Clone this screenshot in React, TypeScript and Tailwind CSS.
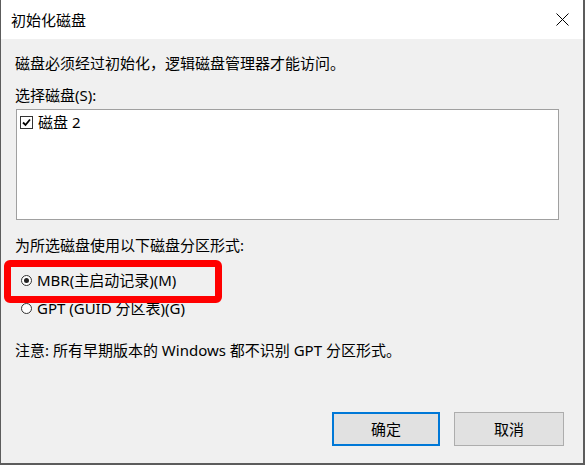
import React from "react";

const font = { fontFamily: '"Noto Sans", "Noto Sans CJK SC", sans-serif' };

export default function App() {
  return (
    <div
      className="relative w-[585px] h-[465px] overflow-hidden bg-[#f0f0f0] border-l border-r-2 border-b-2 border-[#5c5c5c] text-black text-[15px] leading-[20px]"
      style={font}
    >
      {/* title bar */}
      <div className="h-[39px] bg-white flex items-center justify-between pl-[10px] pr-[14px]">
        <span>初始化磁盘</span>
        <svg width="13" height="13" viewBox="0 0 13 13">
          <path d="M0.5 0.5 L12.5 12.5 M12.5 0.5 L0.5 12.5" stroke="#000" strokeWidth="1" />
        </svg>
      </div>

      <div className="flex flex-col pl-[14px]">
        <p className="mt-[14px]">磁盘必须经过初始化，逻辑磁盘管理器才能访问。</p>
        <p className="mt-[12px]">选择磁盘(S):</p>

        <div className="mt-[4px] ml-[1px] w-[543px] h-[111px] bg-white border border-[#a0a0a0]">
          <div className="flex items-center gap-[5px] pl-[3px] pt-[2px]">
            <span className="w-[13px] h-[13px] border border-[#333] bg-white flex items-center justify-center">
              <svg width="9" height="9" viewBox="0 0 9 9">
                <path d="M1 4.5 L3.5 7 L8 1.5" stroke="#000" strokeWidth="1.8" fill="none" />
              </svg>
            </span>
            <span>磁盘 2</span>
          </div>
        </div>

        <p className="mt-[15px]">为所选磁盘使用以下磁盘分区形式:</p>

        <div className="mt-[15px] flex items-center gap-[5px] pl-[6px]">
          <span className="w-[11px] h-[11px] rounded-full border border-[#333] bg-white flex items-center justify-center">
            <span className="w-[5px] h-[5px] rounded-full bg-[#222]" />
          </span>
          <span>MBR(主启动记录)(M)</span>
        </div>
        <div className="mt-[8px] flex items-center gap-[5px] pl-[6px]">
          <span className="w-[11px] h-[11px] rounded-full border border-[#333] bg-white" />
          <span>GPT (GUID 分区表)(G)</span>
        </div>

        <p className="mt-[22px]">注意: 所有早期版本的 Windows 都不识别 GPT 分区形式。</p>

        <div className="mt-[52px] flex justify-end gap-[14px] pr-[19px]">
          <button className="w-[108px] h-[34px] bg-[#e1e1e1] border-2 border-[#0078d7]">确定</button>
          <button className="w-[110px] h-[34px] bg-[#e1e1e1] border border-[#adadad]">取消</button>
        </div>
      </div>

      {/* red annotation */}
      <div className="absolute left-[3px] top-[260px] w-[218px] h-[43px] border-[7px] border-[#ff0000] rounded-[6px]" />
    </div>
  );
}
